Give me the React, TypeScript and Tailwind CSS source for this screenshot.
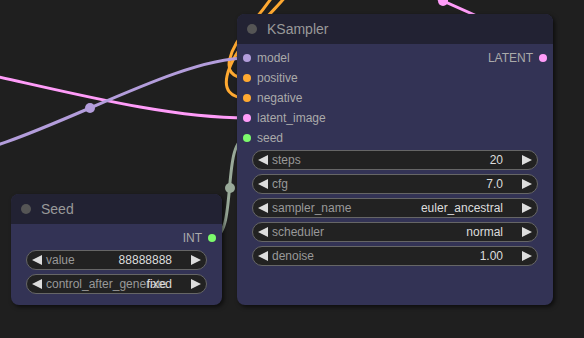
import React from 'react';

type Slot = { name: string; color: string };
type Widget = { label: string; value: string };

const font = { fontFamily: '"Liberation Sans", Arial, sans-serif' };

const Arrow = ({ dir }: { dir: 'left' | 'right' }) => (
  <svg width="10" height="10" viewBox="0 0 10 10" className="shrink-0 block">
    {dir === 'left' ? <polygon points="10,0 0,5 10,10" fill="#dddddd" /> : <polygon points="0,0 10,5 0,10" fill="#dddddd" />}
  </svg>
);

// the value is drawn over the label, as the canvas does when the label is too long
const WidgetRow = ({ w }: { w: Widget }) => (
  <div className="mx-[15px] h-[20px] rounded-full border border-[#666] bg-[#222] flex items-center text-[12px] leading-[16px]">
    <div className="ml-[5px]">
      <Arrow dir="left" />
    </div>
    <div className="flex-1 grid ml-[4px]">
      <span className="col-start-1 row-start-1 justify-self-start text-[#999] whitespace-nowrap">{w.label}</span>
      <span className="col-start-1 row-start-1 justify-self-end text-[#ddd] whitespace-nowrap">{w.value}</span>
    </div>
    <div className="ml-[19px] mr-[5px]">
      <Arrow dir="right" />
    </div>
  </div>
);

const Dot = ({ color }: { color: string }) => (
  <span className="block w-[8px] h-[8px] rounded-full shrink-0" style={{ backgroundColor: color }} />
);

const NodeTitle = ({ title }: { title: string }) => (
  <div className="h-[30px] rounded-t-lg bg-[#222233] flex items-center">
    <span className="ml-[10px] w-[10px] h-[10px] rounded-full bg-[#555]" />
    <span className="ml-[10px] text-[14px] text-[#999]">{title}</span>
  </div>
);

const kInputs: Slot[] = [
  { name: 'model', color: '#b39ddb' },
  { name: 'positive', color: '#ffa931' },
  { name: 'negative', color: '#ffa931' },
  { name: 'latent_image', color: '#ff9cf9' },
  { name: 'seed', color: '#7cfa6c' },
];

const kWidgets: Widget[] = [
  { label: 'steps', value: '20' },
  { label: 'cfg', value: '7.0' },
  { label: 'sampler_name', value: 'euler_ancestral' },
  { label: 'scheduler', value: 'normal' },
  { label: 'denoise', value: '1.00' },
];

const seedWidgets: Widget[] = [
  { label: 'value', value: '88888888' },
  { label: 'control_after_generate', value: 'fixed' },
];

const Wires = () => (
  <svg className="absolute inset-0" width="584" height="338" viewBox="0 0 584 338">
    {/* latent out, going up behind the sampler */}
    <path d="M543,58 C600.5,58 285.5,-56 343,-56" fill="none" stroke="#ff9cf9" strokeWidth="3" />
    <circle cx="443" cy="1" r="5" fill="#ff9cf9" />
    {/* conditioning */}
    <path d="M247,78 C215,78 232,45 250,25 S270,0 280,-15" fill="none" stroke="#ffa931" strokeWidth="3" />
    <path d="M247,98 C212,98 226,62 255,30 S285,0 292,-15" fill="none" stroke="#ffa931" strokeWidth="3" />
    {/* latent in */}
    <path d="M-10,75 C80,95 170,118 247,118" fill="none" stroke="#ff9cf9" strokeWidth="3" />
    {/* model */}
    <path d="M-67,158 C15,158 165,58 247,58" fill="none" stroke="#b39ddb" strokeWidth="3" />
    <circle cx="90" cy="108" r="5" fill="#b39ddb" />
    {/* seed int */}
    <path d="M212,238 C238.5,238 220.5,138 247,138" fill="none" stroke="#99aa99" strokeWidth="3" />
    <circle cx="230" cy="188" r="5" fill="#99aa99" />
  </svg>
);

export default function App() {
  return (
    <div className="relative w-[584px] h-[338px] overflow-hidden bg-[#1f1f1f]" style={font}>
      <Wires />

      {/* KSampler */}
      <div className="absolute left-[237px] top-[14px] w-[316px] h-[291px] rounded-lg bg-[#333355] shadow-[2px_2px_4px_rgba(0,0,0,0.6)]">
        <NodeTitle title="KSampler" />
        <div className="pt-[4px] text-[12px] text-[#aaa]">
          {kInputs.map((s, i) => (
            <div key={s.name} className="h-[20px] flex items-center">
              <span className="ml-[6px]">
                <Dot color={s.color} />
              </span>
              <span className="ml-[6px] flex-1">{s.name}</span>
              {i === 0 && (
                <>
                  <span>LATENT</span>
                  <span className="ml-[6px] mr-[6px]">
                    <Dot color="#ff9cf9" />
                  </span>
                </>
              )}
            </div>
          ))}
        </div>
        <div className="mt-[2px] flex flex-col gap-[4px]">
          {kWidgets.map((w) => (
            <WidgetRow key={w.label} w={w} />
          ))}
        </div>
      </div>

      {/* Seed */}
      <div className="absolute left-[11px] top-[194px] w-[211px] h-[111px] rounded-lg bg-[#333355] shadow-[2px_2px_4px_rgba(0,0,0,0.6)]">
        <NodeTitle title="Seed" />
        <div className="pt-[4px] text-[12px] text-[#aaa]">
          <div className="h-[20px] flex items-center justify-end">
            <span>INT</span>
            <span className="ml-[6px] mr-[6px]">
              <Dot color="#7cfa6c" />
            </span>
          </div>
        </div>
        <div className="mt-[2px] flex flex-col gap-[4px]">
          {seedWidgets.map((w) => (
            <WidgetRow key={w.label} w={w} />
          ))}
        </div>
      </div>
    </div>
  );
}
